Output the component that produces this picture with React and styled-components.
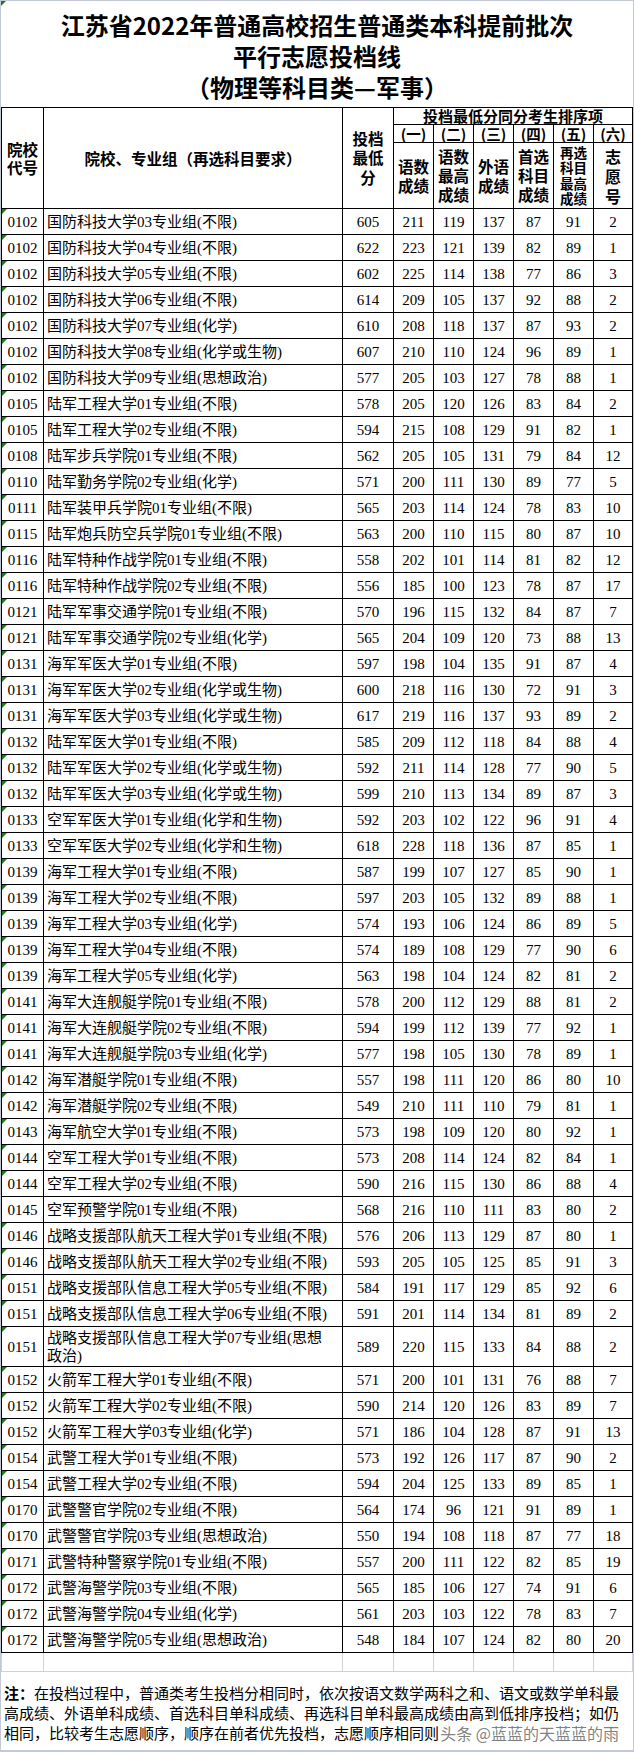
import React from 'react';
import styled, { createGlobalStyle } from 'styled-components';

const GlobalStyle = createGlobalStyle`
  html, body { margin: 0; padding: 0; background: #fff; }
  body { width: 634px; font-family: "Noto Sans CJK SC", sans-serif; color: #000; }
`;

const COLS = '41px 298px 50px 39px 39px 39px 39px 39px 38px';
const FRAME = '#c3cad6';

const Sheet = styled.div`
  width: 634px;
  height: 1752px;
  box-sizing: border-box;
  border-left: 1px solid ${FRAME};
  border-right: 1px solid ${FRAME};
  border-top: 1px solid ${FRAME};
  border-bottom: 2px solid ${FRAME};
  position: relative;
  display: flex;
  flex-direction: column;
  overflow: hidden;
  background: #fff;
`;

const Title = styled.h1`
  margin: 0;
  height: 106px;
  flex: none;
  box-sizing: border-box;
  padding-top: 8px;
  font: 700 24px/31px "Noto Sans CJK SC", sans-serif;
  text-align: center;
  position: relative;
`;

const TitleLine = styled.div`
  white-space: nowrap;
`;

const Flag = styled.span`
  position: absolute;
  top: 0;
  left: 0;
  width: 0;
  height: 0;
  border-top: 5px solid #17801a;
  border-right: 5px solid transparent;
`;

const Table = styled.div`
  display: flex;
  flex-direction: column;
  gap: 1px;
  background: #000;
  border: 1px solid #000;
  flex: none;
`;

const HeaderGrid = styled.div`
  display: grid;
  grid-template-columns: ${COLS};
  grid-template-rows: 16px 17px 65px;
  gap: 1px;
`;

const HCell = styled.div`
  background: #fff;
  grid-column: ${(p) => p.$col};
  grid-row: ${(p) => p.$row};
  display: flex;
  flex-direction: column;
  align-items: center;
  justify-content: center;
  font-family: "Noto Sans CJK SC", sans-serif;
  font-weight: 700;
  font-size: ${(p) => p.$size || 15.5}px;
  line-height: ${(p) => p.$lh || 18}px;
  text-align: center;
  white-space: nowrap;
`;

const Row = styled.div`
  display: grid;
  grid-template-columns: ${COLS};
  gap: 1px;
  min-height: ${(p) => (p.$tall ? 39 : 25)}px;
`;

const Cell = styled.div`
  background: #fff;
  position: relative;
  display: flex;
  align-items: center;
  justify-content: ${(p) => (p.$left ? 'flex-start' : 'center')};
  padding-left: ${(p) => (p.$left ? 3 : 0)}px;
  font-family: "Liberation Serif", "Noto Sans CJK SC", serif;
  font-size: 15px;
  line-height: 18px;
  white-space: nowrap;
`;

const NameText = styled.div`
  display: flex;
  flex-direction: column;
`;

const BlankRow = styled.div`
  display: grid;
  grid-template-columns: ${COLS};
  gap: 1px;
  background: #cdd3dd;
  padding: 0 1px 1px 1px;
  height: 19px;
  box-sizing: border-box;
  flex: none;
`;

const BlankCell = styled.div`
  background: #fff;
`;

const Note = styled.div`
  position: relative;
  flex: 1;
  padding: 11px 0 0 3px;
  font-family: "Noto Sans CJK SC", sans-serif;
  font-size: 15px;
  line-height: 20px;
`;

const NoteLine = styled.div`
  white-space: nowrap;
`;

const NoteLabel = styled.b`
  font-weight: 700;
`;

const Watermark = styled.div`
  position: absolute;
  right: 14px;
  top: 51px;
  font-family: "Noto Sans CJK SC", sans-serif;
  font-size: 16px;
  line-height: 20px;
  color: rgba(95, 95, 95, 0.8);
  text-shadow: 0 0 1px #fff, 1px 1px 0 rgba(255, 255, 255, 0.9), -1px -1px 0 rgba(255, 255, 255, 0.9);
  white-space: nowrap;
`;

const rows = [
  ['0102', '国防科技大学03专业组(不限)', 605, 211, 119, 137, 87, 91, 2],
  ['0102', '国防科技大学04专业组(不限)', 622, 223, 121, 139, 82, 89, 1],
  ['0102', '国防科技大学05专业组(不限)', 602, 225, 114, 138, 77, 86, 3],
  ['0102', '国防科技大学06专业组(不限)', 614, 209, 105, 137, 92, 88, 2],
  ['0102', '国防科技大学07专业组(化学)', 610, 208, 118, 137, 87, 93, 2],
  ['0102', '国防科技大学08专业组(化学或生物)', 607, 210, 110, 124, 96, 89, 1],
  ['0102', '国防科技大学09专业组(思想政治)', 577, 205, 103, 127, 78, 88, 1],
  ['0105', '陆军工程大学01专业组(不限)', 578, 205, 120, 126, 83, 84, 2],
  ['0105', '陆军工程大学02专业组(不限)', 594, 215, 108, 129, 91, 82, 1],
  ['0108', '陆军步兵学院01专业组(不限)', 562, 205, 105, 131, 79, 84, 12],
  ['0110', '陆军勤务学院02专业组(化学)', 571, 200, 111, 130, 89, 77, 5],
  ['0111', '陆军装甲兵学院01专业组(不限)', 565, 203, 114, 124, 78, 83, 10],
  ['0115', '陆军炮兵防空兵学院01专业组(不限)', 563, 200, 110, 115, 80, 87, 10],
  ['0116', '陆军特种作战学院01专业组(不限)', 558, 202, 101, 114, 81, 82, 12],
  ['0116', '陆军特种作战学院02专业组(不限)', 556, 185, 100, 123, 78, 87, 17],
  ['0121', '陆军军事交通学院01专业组(不限)', 570, 196, 115, 132, 84, 87, 7],
  ['0121', '陆军军事交通学院02专业组(化学)', 565, 204, 109, 120, 73, 88, 13],
  ['0131', '海军军医大学01专业组(不限)', 597, 198, 104, 135, 91, 87, 4],
  ['0131', '海军军医大学02专业组(化学或生物)', 600, 218, 116, 130, 72, 91, 3],
  ['0131', '海军军医大学03专业组(化学或生物)', 617, 219, 116, 137, 93, 89, 2],
  ['0132', '陆军军医大学01专业组(不限)', 585, 209, 112, 118, 84, 88, 4],
  ['0132', '陆军军医大学02专业组(化学或生物)', 592, 211, 114, 128, 77, 90, 5],
  ['0132', '陆军军医大学03专业组(化学或生物)', 599, 210, 113, 134, 89, 87, 3],
  ['0133', '空军军医大学01专业组(化学和生物)', 592, 203, 102, 122, 96, 91, 4],
  ['0133', '空军军医大学02专业组(化学和生物)', 618, 228, 118, 136, 87, 85, 1],
  ['0139', '海军工程大学01专业组(不限)', 587, 199, 107, 127, 85, 90, 1],
  ['0139', '海军工程大学02专业组(不限)', 597, 203, 105, 132, 89, 88, 1],
  ['0139', '海军工程大学03专业组(化学)', 574, 193, 106, 124, 86, 89, 5],
  ['0139', '海军工程大学04专业组(不限)', 574, 189, 108, 129, 77, 90, 6],
  ['0139', '海军工程大学05专业组(化学)', 563, 198, 104, 124, 82, 81, 2],
  ['0141', '海军大连舰艇学院01专业组(不限)', 578, 200, 112, 129, 88, 81, 2],
  ['0141', '海军大连舰艇学院02专业组(不限)', 594, 199, 112, 139, 77, 92, 1],
  ['0141', '海军大连舰艇学院03专业组(化学)', 577, 198, 105, 130, 78, 89, 1],
  ['0142', '海军潜艇学院01专业组(不限)', 557, 198, 111, 120, 86, 80, 10],
  ['0142', '海军潜艇学院02专业组(不限)', 549, 210, 111, 110, 79, 81, 1],
  ['0143', '海军航空大学01专业组(不限)', 573, 198, 109, 120, 80, 92, 1],
  ['0144', '空军工程大学01专业组(不限)', 573, 208, 114, 124, 82, 84, 1],
  ['0144', '空军工程大学02专业组(不限)', 590, 216, 115, 130, 86, 88, 4],
  ['0145', '空军预警学院01专业组(不限)', 568, 216, 110, 111, 83, 80, 2, true],
  ['0146', '战略支援部队航天工程大学01专业组(不限)', 576, 206, 113, 129, 87, 80, 1],
  ['0146', '战略支援部队航天工程大学02专业组(不限)', 593, 205, 105, 125, 85, 91, 3],
  ['0151', '战略支援部队信息工程大学05专业组(不限)', 584, 191, 117, 129, 85, 92, 6],
  ['0151', '战略支援部队信息工程大学06专业组(不限)', 591, 201, 114, 134, 81, 89, 2],
  ['0151', ['战略支援部队信息工程大学07专业组(思想', '政治)'], 589, 220, 115, 133, 84, 88, 2],
  ['0152', '火箭军工程大学01专业组(不限)', 571, 200, 101, 131, 76, 88, 7],
  ['0152', '火箭军工程大学02专业组(不限)', 590, 214, 120, 126, 83, 89, 7],
  ['0152', '火箭军工程大学03专业组(化学)', 571, 186, 104, 128, 87, 91, 13],
  ['0154', '武警工程大学01专业组(不限)', 573, 192, 126, 117, 87, 90, 2],
  ['0154', '武警工程大学02专业组(不限)', 594, 204, 125, 133, 89, 85, 1],
  ['0170', '武警警官学院02专业组(不限)', 564, 174, 96, 121, 91, 89, 1],
  ['0170', '武警警官学院03专业组(思想政治)', 550, 194, 108, 118, 87, 77, 18],
  ['0171', '武警特种警察学院01专业组(不限)', 557, 200, 111, 122, 82, 85, 19],
  ['0172', '武警海警学院03专业组(不限)', 565, 185, 106, 127, 74, 91, 6],
  ['0172', '武警海警学院04专业组(化学)', 561, 203, 103, 122, 78, 83, 7],
  ['0172', '武警海警学院05专业组(思想政治)', 548, 184, 107, 124, 82, 80, 20],
];

const Header = () => (
  <HeaderGrid>
    <HCell $col="1" $row="1 / 4">
      <span>院校</span>
      <span>代号</span>
    </HCell>
    <HCell $col="2" $row="1 / 4">院校、专业组（再选科目要求）</HCell>
    <HCell $col="3" $row="1 / 4" $lh={19.5}>
      <span>投档</span>
      <span>最低</span>
      <span>分</span>
    </HCell>
    <HCell $col="4 / 10" $row="1" $size={15} $lh={16}>投档最低分同分考生排序项</HCell>
    {['一', '二', '三', '四', '五', '六'].map((n, i) => (
      <HCell key={n} $col={String(4 + i)} $row="2" $size={14.5} $lh={17}>{`(${n})`}</HCell>
    ))}
    <HCell $col="4" $row="3" $lh={19}>
      <span>语数</span>
      <span>成绩</span>
    </HCell>
    <HCell $col="5" $row="3" $lh={19}>
      <span>语数</span>
      <span>最高</span>
      <span>成绩</span>
    </HCell>
    <HCell $col="6" $row="3" $lh={19}>
      <span>外语</span>
      <span>成绩</span>
    </HCell>
    <HCell $col="7" $row="3" $lh={19}>
      <span>首选</span>
      <span>科目</span>
      <span>成绩</span>
    </HCell>
    <HCell $col="8" $row="3" $size={13.5} $lh={15.5}>
      <span>再选</span>
      <span>科目</span>
      <span>最高</span>
      <span>成绩</span>
    </HCell>
    <HCell $col="9" $row="3" $size={16} $lh={20}>
      <span>志</span>
      <span>愿</span>
      <span>号</span>
    </HCell>
  </HeaderGrid>
);

const DataRow = ({ data }) => {
  const [code, name, ...rest] = data;
  const noFlag = rest[7] === true;
  const nums = rest.slice(0, 7);
  const lines = Array.isArray(name) ? name : [name];
  return (
    <Row $tall={lines.length > 1}>
      <Cell>
        {!noFlag && <Flag />}
        {code}
      </Cell>
      <Cell $left>
        <NameText>
          {lines.map((l) => (
            <span key={l}>{l}</span>
          ))}
        </NameText>
      </Cell>
      {nums.map((n, i) => (
        <Cell key={i}>{n}</Cell>
      ))}
    </Row>
  );
};

export default function App() {
  return (
    <>
      <GlobalStyle />
      <Sheet>
        <Title>
          <Flag />
          <TitleLine>江苏省2022年普通高校招生普通类本科提前批次</TitleLine>
          <TitleLine>平行志愿投档线</TitleLine>
          <TitleLine>（物理等科目类—军事）</TitleLine>
        </Title>
        <Table>
          <Header />
          {rows.map((r, i) => (
            <DataRow key={i} data={r} />
          ))}
        </Table>
        <BlankRow>
          {Array.from({ length: 9 }).map((_, i) => (
            <BlankCell key={i} />
          ))}
        </BlankRow>
        <Note>
          <NoteLine>
            <NoteLabel>注：</NoteLabel>在投档过程中，普通类考生投档分相同时，依次按语文数学两科之和、语文或数学单科最
          </NoteLine>
          <NoteLine>高成绩、外语单科成绩、首选科目单科成绩、再选科目单科最高成绩由高到低排序投档；如仍</NoteLine>
          <NoteLine>相同，比较考生志愿顺序，顺序在前者优先投档，志愿顺序相同则</NoteLine>
          <Watermark>头条 @蓝蓝的天蓝蓝的雨</Watermark>
        </Note>
      </Sheet>
    </>
  );
}
